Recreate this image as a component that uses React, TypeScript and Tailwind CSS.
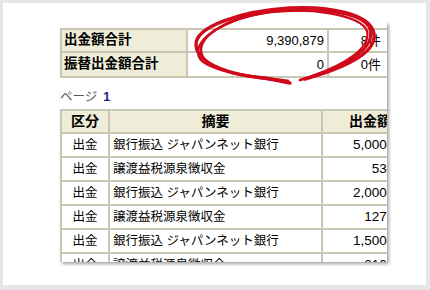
const FONT = { fontFamily: '"Liberation Sans", "Noto Sans CJK JP", sans-serif' };

const ROWS = [
  { kind: "出金", memo: "銀行振込 ジャパンネット銀行", amount: "5,000,000" },
  { kind: "出金", memo: "譲渡益税源泉徴収金", amount: "53,318" },
  { kind: "出金", memo: "銀行振込 ジャパンネット銀行", amount: "2,000,000" },
  { kind: "出金", memo: "譲渡益税源泉徴収金", amount: "127,561" },
  { kind: "出金", memo: "銀行振込 ジャパンネット銀行", amount: "1,500,000" },
  { kind: "出金", memo: "譲渡益税源泉徴収金", amount: "210,000" },
];

function RedCircle() {
  return (
    <svg className="absolute left-[-3px] top-[-3px] pointer-events-none" width="430" height="290" viewBox="0 0 430 290" fill="none">
      <g stroke="#cf0a1a" strokeLinecap="round" strokeLinejoin="round">
        <path strokeWidth={3.4} d="M305 79 C337 70 377 55 374 34 C371 14 330 6 290 8 C240 11 195 27 196 45 C197 65 235 76 265 78 L290 83" />
        <path strokeWidth={2.8} d="M300 80 C341 68 379 50 369 27 C359 11 320 9 280 11 C230 15 199 35 201 52 C204 70 240 77 288 81" />
        <path strokeWidth={2.2} d="M312 76 C346 64 371 48 367 31 C361 15 310 7 270 12 C228 18 192 38 199 57 C205 71 250 76 284 80" />
      </g>
    </svg>
  );
}

export default function App() {
  return (
    <div className="w-[430px] h-[290px] bg-[#e6e6e6] pt-[3px] pl-[3px]" style={FONT}>
      <div className="relative w-[423px] h-[282px] bg-white pl-[57px] pt-[19px]">
        <div className="w-[327px] h-[240px] overflow-hidden bg-white pt-[6px] shadow-[2px_2px_3px_rgba(0,0,0,0.35)]">
          {/* 合計 */}
          <div className="w-[339px] grid grid-cols-[126px_141px_70px] border-t-2 border-l-2 border-[#cac6b4] text-black">
            <div className="h-[23px] flex items-center pl-[2px] bg-[#efecd8] border-r-2 border-b-2 border-[#cac6b4] text-[13.5px] font-bold">出金額合計</div>
            <div className="h-[23px] flex items-center justify-end pr-[3px] border-r-2 border-b-2 border-[#cac6b4] text-[13px]">9,390,879</div>
            <div className="h-[23px] flex items-center justify-end pr-[18px] border-b-2 border-[#cac6b4] text-[13px]">8件</div>
            <div className="h-[25px] flex items-center pl-[2px] bg-[#efecd8] border-r-2 border-b-2 border-[#cac6b4] text-[13.5px] font-bold">振替出金額合計</div>
            <div className="h-[25px] flex items-center justify-end pr-[3px] border-r-2 border-b-2 border-[#cac6b4] text-[13px]">0</div>
            <div className="h-[25px] flex items-center justify-end pr-[18px] border-b-2 border-[#cac6b4] text-[13px]">0件</div>
          </div>

          <div className="h-[31px] pt-[7px] flex items-center gap-[6px] text-[12.5px]">
            <span className="text-[#555]">ページ</span>
            <span className="text-[#1a1a7a] font-bold">1</span>
          </div>

          {/* 明細 */}
          <div className="w-[359px] grid grid-cols-[48px_213px_96px] border-t-2 border-l-2 border-[#cac6b4] text-black">
            <div className="h-[23px] flex items-center justify-center bg-[#efecd8] border-r-2 border-b-2 border-[#cac6b4] text-[14px] font-bold">区分</div>
            <div className="h-[23px] flex items-center justify-center bg-[#efecd8] border-r-2 border-b-2 border-[#cac6b4] text-[14px] font-bold">摘要</div>
            <div className="h-[23px] flex items-center justify-center bg-[#efecd8] border-r-2 border-b-2 border-[#cac6b4] text-[14px] font-bold">出金額</div>
            {ROWS.map((r, i) => (
              <div key={i} className="contents">
                <div className="h-[24px] flex items-center justify-center border-r-2 border-b-2 border-[#cac6b4] text-[12.5px]">{r.kind}</div>
                <div className="h-[24px] flex items-center pl-[3px] border-r-2 border-b-2 border-[#cac6b4] text-[12.5px] whitespace-nowrap">{r.memo}</div>
                <div className="h-[24px] flex items-center justify-end pr-[4px] border-r-2 border-b-2 border-[#cac6b4] text-[13.5px]">{r.amount}</div>
              </div>
            ))}
          </div>
        </div>
        <RedCircle />
      </div>
    </div>
  );
}
